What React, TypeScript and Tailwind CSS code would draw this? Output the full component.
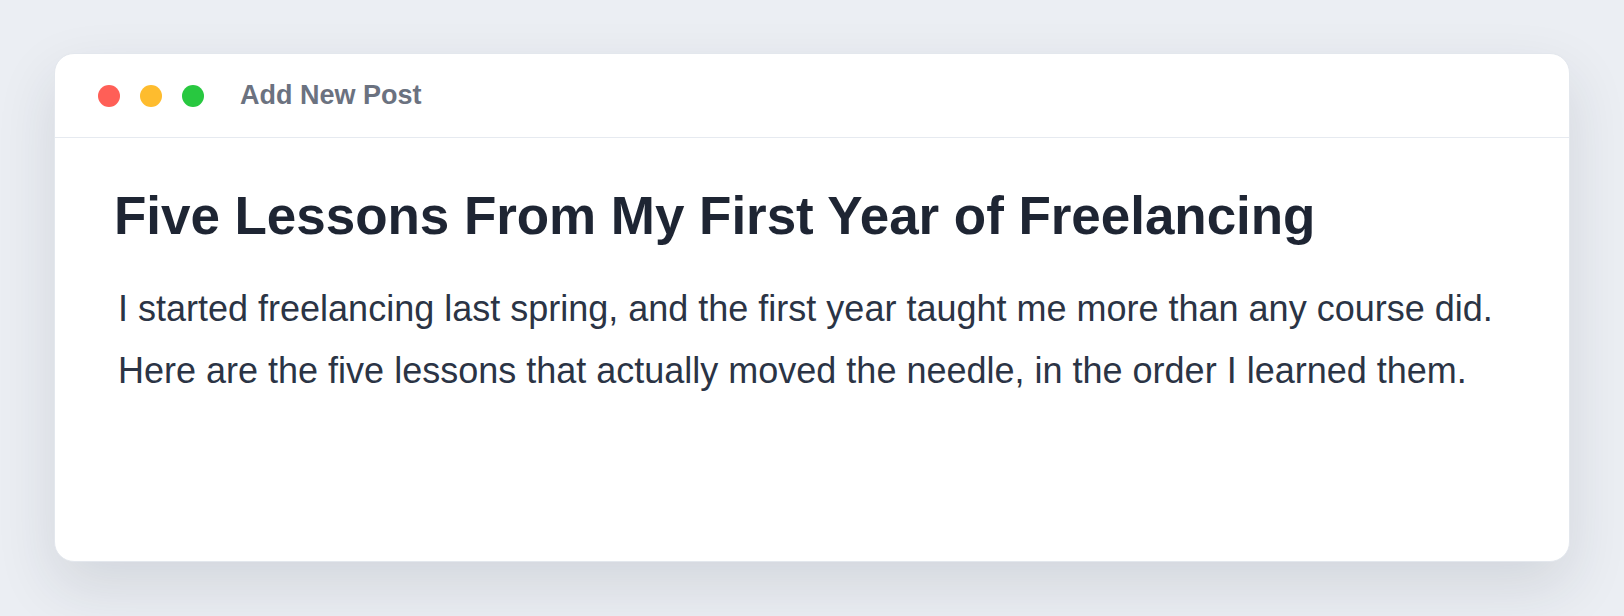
const TITLE = 'Five Lessons From My First Year of Freelancing';

const BODY = [
  'I started freelancing last spring, and the first year taught me more than any course did.',
  'Here are the five lessons that actually moved the needle, in the order I learned them.',
];

function WindowDots() {
  return (
    <div className="flex items-center gap-5">
      <span className="block h-[22px] w-[22px] rounded-full bg-[#ff5f57]" />
      <span className="block h-[22px] w-[22px] rounded-full bg-[#febc2e]" />
      <span className="block h-[22px] w-[22px] rounded-full bg-[#28c840]" />
    </div>
  );
}

export default function App() {
  return (
    <div
      className="min-h-[616px] bg-[#ebeef3] px-[54px] pt-[53px] pb-[54px]"
      style={{ fontFamily: '"Liberation Sans", Arial, sans-serif' }}
    >
      <div className="flex h-[509px] flex-col overflow-hidden rounded-[20px] border border-[#e3e7ed] bg-white shadow-[0_24px_60px_rgba(30,41,59,0.12)]">
        {/* title bar */}
        <div className="flex h-[84px] items-center border-b border-[#e6eaf0] pl-[43px]">
          <WindowDots />
          <span className="ml-[36px] text-[27px] font-bold text-[#6b7280]">Add New Post</span>
        </div>

        {/* editor */}
        <div className="pt-[46px] pl-[59px]">
          <h1 className="text-[53px] font-bold leading-[1.2] tracking-[-0.05px] text-[#1e2533]">{TITLE}</h1>
          <div className="mt-[30px] pl-[4px] text-[36px] leading-[62px] text-[#2b3445]">
            {BODY.map((line) => (
              <p key={line}>{line}</p>
            ))}
          </div>
        </div>
      </div>
    </div>
  );
}
